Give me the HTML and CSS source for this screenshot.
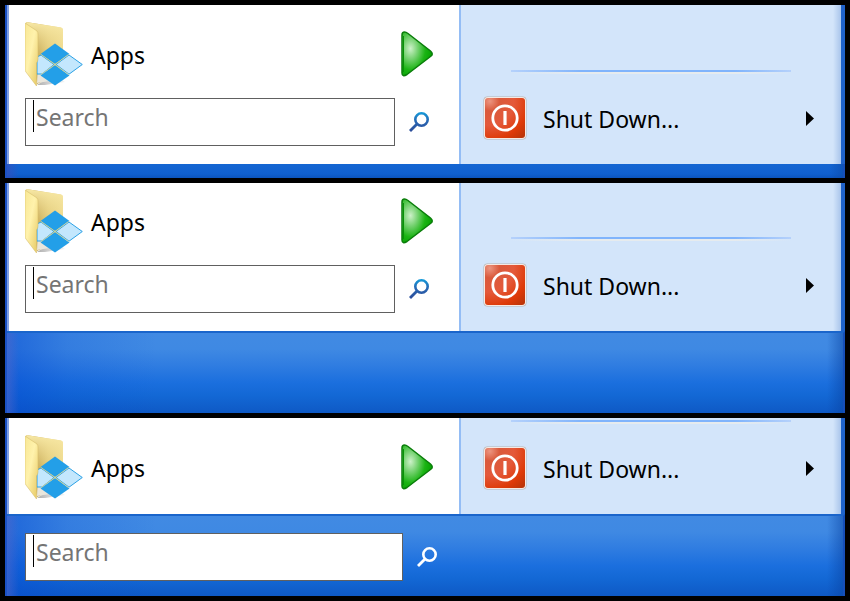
FILE: index.html
```html
<!DOCTYPE html>
<html lang="en">
<head>
<meta charset="utf-8">
<title>Start menu</title>
<link rel="stylesheet" href="styles.css">
</head>
<body>
<svg class="sprite" width="0" height="0" aria-hidden="true">
  <defs>
    <linearGradient id="folder-back" x1="0" y1="0" x2="1" y2="0"><stop offset="0.3" stop-color="#c0a24e"/><stop offset="0.6" stop-color="#dfc876"/><stop offset="1" stop-color="#f0dd92"/></linearGradient>
    <linearGradient id="folder-fade" x1="0" y1="0" x2="0" y2="1"><stop offset="0" stop-color="#f8e9a6"/><stop offset="0.6" stop-color="#eed98e" stop-opacity="0.1"/></linearGradient>
    <linearGradient id="folder-front" x1="0" y1="0" x2="1" y2="1"><stop offset="0" stop-color="#f8e795"/><stop offset="0.45" stop-color="#fff2ac"/><stop offset="1" stop-color="#e6c75f"/></linearGradient>
    <linearGradient id="shade" x1="0" y1="0" x2="1" y2="0"><stop offset="0" stop-color="#777" stop-opacity="0.6"/><stop offset="1" stop-color="#999" stop-opacity="0.1"/></linearGradient>
    <radialGradient id="green" cx="0.28" cy="0.38" r="0.7"><stop offset="0" stop-color="#cdf1c9"/><stop offset="0.35" stop-color="#74d16f"/><stop offset="0.7" stop-color="#1bb414"/><stop offset="1" stop-color="#08a503"/></radialGradient>
    <radialGradient id="red" cx="0.12" cy="0.08" r="1.2"><stop offset="0" stop-color="#ec9580"/><stop offset="0.2" stop-color="#da5a3c"/><stop offset="0.5" stop-color="#e4593a"/><stop offset="0.8" stop-color="#de3a08"/><stop offset="1" stop-color="#bd3508"/></radialGradient>
    <linearGradient id="lens" gradientUnits="userSpaceOnUse" x1="0" y1="0" x2="0" y2="20"><stop offset="0" stop-color="#149cda"/><stop offset="0.45" stop-color="#2868b4"/><stop offset="1" stop-color="#2c4b98"/></linearGradient>
  </defs>
  <symbol id="folder" viewBox="0 0 58 64">
    <path d="M12 63L20 58L36 57L40 60L20 63Z" fill="url(#shade)"/>
    <path d="M1 0L36 5.500Q38 6 38 8V50L12 62Z" fill="url(#folder-back)"/>
    <path d="M1 0L36 5.500Q38 6 38 8V50L12 62Z" fill="url(#folder-fade)"/>
    <path d="M13 42L38 50V57L12 61Z" fill="#e9e6dc"/>
    <path d="M12 52V35L16 33L29 42.500L17 52Z" fill="#c3e7fd" stroke="#2ba1e5"/>
    <path d="M0 1L12 9Q13 10 13 12V37Q13 39 11.500 41V64L1 50Q0 49 0 47Z" fill="url(#folder-front)" stroke="#d8c06c" stroke-width="0.600"/>
    <path d="M30 21.500L44.500 32L30 42L15.500 32Z" fill="#239fe8"/>
    <path d="M30 43L44.500 53.500L30 63.500L15.500 53.500Z" fill="#239fe8"/>
    <path d="M44 33L57.300 42.500L44 52.200L31 42.500Z" fill="#c3e7fd" stroke="#2ba1e5"/>
    <path d="M16 32.500L30 42.500L43.500 52.500M43.500 32.500L30 42.500L16 52.500" fill="none" stroke="#cfd199" stroke-width="0.900"/>
  </symbol>
  <symbol id="play" viewBox="0 0 32 46">
    <path d="M1 4Q1 1 3.500 1Q5 1 7 2.500L29.500 20Q33 23 29.500 25.500L6 43.500Q1 46.500 1 42Z" fill="url(#green)" stroke="#0a7d0a" stroke-width="1.500"/>
    <path d="M2.500 5V41" fill="none" stroke="#079207" stroke-width="1"/>
  </symbol>
  <symbol id="power" viewBox="0 0 44 44">
    <rect x="0.500" y="0.500" width="43" height="43" rx="4" fill="#b4b3b2"/>
    <rect x="1" y="1" width="42" height="42" rx="4" fill="#f5e9e4"/>
    <rect x="2" y="2" width="40" height="40" rx="3" fill="url(#red)"/>
    <circle cx="22" cy="22" r="12.200" fill="none" stroke="#fff" stroke-width="2.800"/>
    <path d="M22 15V29" stroke="#fff" stroke-width="3.200"/>
  </symbol>
  <symbol id="search" viewBox="0 0 20 20">
    <circle cx="12.500" cy="7.500" r="6.200" fill="none" stroke-width="2.600"/>
    <path d="M8 12L1 19" fill="none" stroke-width="2.800"/>
  </symbol>
</svg>

<main class="stack">
  <section class="menu menu-slim">
    <div class="panes">
      <div class="programs">
        <button class="apps" type="button"><svg class="folder"><use href="#folder"/></svg><span class="label">Apps</span><svg class="play"><use href="#play"/></svg></button>
        <form class="search">
          <div class="field"><input type="text" placeholder="Search" aria-label="Search programs"><span class="caret"></span></div>
          <button class="go" type="button" aria-label="Search"><svg class="glass"><use href="#search"/></svg></button>
        </form>
      </div>
      <div class="places">
        <hr>
        <button class="shutdown" type="button"><svg class="power"><use href="#power"/></svg><span class="label">Shut Down...</span><svg class="arrow" viewBox="0 0 8 15"><path d="M0 0L8 7.500L0 15Z"/></svg></button>
      </div>
    </div>
    <div class="footer"></div>
  </section>

  <section class="menu menu-short">
    <div class="panes">
      <div class="programs">
        <button class="apps" type="button"><svg class="folder"><use href="#folder"/></svg><span class="label">Apps</span><svg class="play"><use href="#play"/></svg></button>
        <form class="search">
          <div class="field"><input type="text" placeholder="Search" aria-label="Search programs"><span class="caret"></span></div>
          <button class="go" type="button" aria-label="Search"><svg class="glass"><use href="#search"/></svg></button>
        </form>
      </div>
      <div class="places">
        <hr>
        <button class="shutdown" type="button"><svg class="power"><use href="#power"/></svg><span class="label">Shut Down...</span><svg class="arrow" viewBox="0 0 8 15"><path d="M0 0L8 7.500L0 15Z"/></svg></button>
      </div>
    </div>
    <div class="footer footer-tall"></div>
  </section>

  <section class="menu menu-docked">
    <div class="panes">
      <div class="programs">
        <button class="apps" type="button"><svg class="folder"><use href="#folder"/></svg><span class="label">Apps</span><svg class="play"><use href="#play"/></svg></button>
      </div>
      <div class="places">
        <hr>
        <button class="shutdown" type="button"><svg class="power"><use href="#power"/></svg><span class="label">Shut Down...</span><svg class="arrow" viewBox="0 0 8 15"><path d="M0 0L8 7.500L0 15Z"/></svg></button>
      </div>
    </div>
    <div class="footer footer-tall">
      <form class="search">
        <div class="field"><input type="text" placeholder="Search" aria-label="Search programs"><span class="caret"></span></div>
        <button class="go" type="button" aria-label="Search"><svg class="glass"><use href="#search"/></svg></button>
      </form>
    </div>
  </section>
</main>
</body>
</html>
```
FILE: styles.css
```css
* {
  box-sizing: border-box;
}

body {
  margin: 0;
  background: #000;
  color: #000;
  font-family: "Noto Sans", "Open Sans", sans-serif;
  font-size: 23px;
  line-height: 32px;
}

svg {
  display: block;
  flex: none;
}

.sprite {
  position: absolute;
}

button {
  display: flex;
  align-items: center;
  padding: 0;
  border: 0;
  background: none;
  color: inherit;
  font: inherit;
  text-align: left;
}

.stack {
  display: flex;
  flex-direction: column;
  gap: 5px;
  padding: 5px;
}

.menu {
  border-left: 2px solid #1b52c5;
  background: #1a58c6;
}

.panes {
  display: grid;
  grid-template-columns: 454fr 380fr;
  border-right: 4px solid #1f62ca;
}

.programs {
  display: flex;
  flex-direction: column;
  gap: 12px;
  padding: 17px 26px 18px 16px;
  border-left: 2px solid #84a2e4;
  border-right: 2px solid #94bdf5;
  background: #fff;
}

.menu-short .programs {
  padding-top: 6px;
}

.menu-docked .programs {
  padding-bottom: 15px;
}

.apps {
  width: 100%;
}

.label {
  flex: 1;
  padding-top: 2px;
}

.apps .label {
  padding-left: 8px;
}

.shutdown .label {
  padding-left: 16px;
}

.folder {
  width: 58px;
  height: 64px;
}

.play {
  width: 32px;
  height: 46px;
}

.search {
  display: flex;
  align-items: center;
  gap: 14px;
  margin-right: 4px;
}

.field {
  position: relative;
  flex: 1;
}

.field input {
  display: block;
  width: 100%;
  height: 48px;
  padding: 0 10px 10px;
  border: 1px solid #606060;
  border-radius: 0;
  outline: 0;
  background: #fff;
  color: #000;
  font: inherit;
}

.field input::placeholder {
  color: #757575;
  opacity: 1;
}

.caret {
  position: absolute;
  top: 2px;
  left: 8px;
  width: 1px;
  height: 32px;
  background: #000;
}

.glass {
  width: 20px;
  height: 20px;
  stroke: url(#lens);
}

.places {
  display: flex;
  flex-direction: column;
  justify-content: flex-end;
  gap: 22px;
  padding: 0 27px 24px 22px;
  background: linear-gradient(to left, #a9c5eb, #d3e5fa 8px);
}

hr {
  align-self: stretch;
  height: 4px;
  margin: 0 23px 0 28px;
  border: 0;
  background:
    linear-gradient(to right, #b5d1fb, #80b4fc 25%, #80b4fc 80%, #b5d1fb) top / 100% 2px no-repeat,
    linear-gradient(to right, #d3e5fa, #e6ebee 25%, #e6ebee 80%, #d3e5fa) bottom / 100% 2px no-repeat;
}

.shutdown {
  width: 100%;
}

.power {
  width: 44px;
  height: 44px;
}

.arrow {
  width: 8px;
  height: 15px;
}

.footer {
  height: 14px;
  border-right: 2px solid #164fb9;
  background:
    linear-gradient(to right, rgba(60, 75, 185, 0.6), transparent 12px),
    linear-gradient(to left, rgba(11, 75, 170, 0.6), transparent 14px),
    linear-gradient(#1466d2, #1060cf 70%, #0c55bd);
}

.footer-tall {
  height: 82px;
  padding: 17px 0 0 18px;
  border-top: 2px solid #1a65cb;
  background:
    linear-gradient(to right, rgba(90, 105, 200, 0.5), transparent 12px),
    linear-gradient(to left, rgba(8, 65, 160, 0.5), transparent 16px),
    linear-gradient(to right, rgba(5, 75, 210, 0.55), rgba(5, 75, 210, 0.2) 60px, transparent 150px),
    linear-gradient(#418ae3, #3f89e3 20%, #307de1 40%, #1b6fde 62%, #1368d5 78%, #0e59c5);
}

.footer .search {
  width: 100%;
  max-width: 412px;
  margin: 0;
}

.footer .glass {
  stroke: #fff;
}
```
